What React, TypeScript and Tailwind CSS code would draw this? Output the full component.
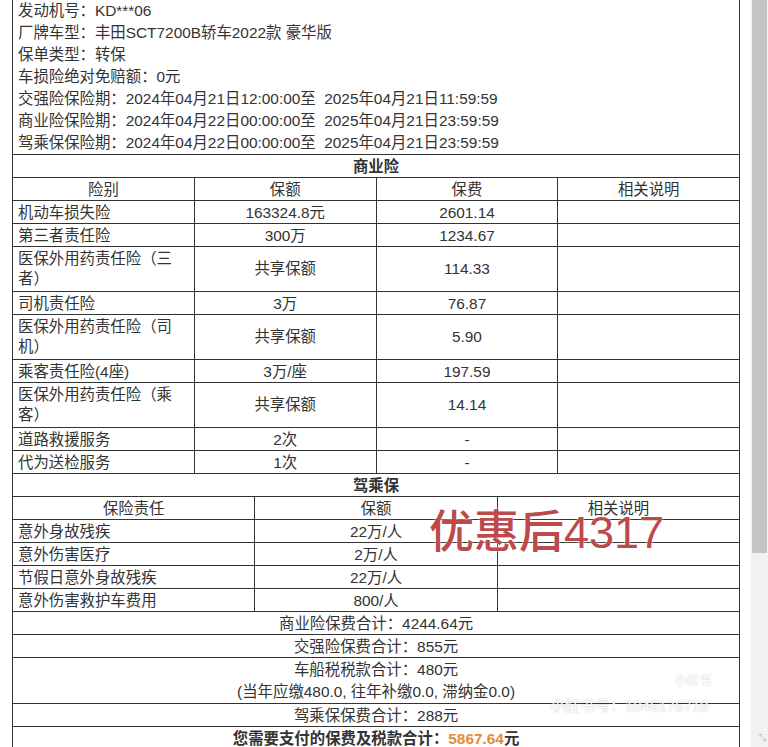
import React from 'react';

type Row = { name: React.ReactNode; amount: string; fee: string; tall?: boolean };

const commercial: Row[] = [
  { name: '机动车损失险', amount: '163324.8元', fee: '2601.14' },
  { name: '第三者责任险', amount: '300万', fee: '1234.67' },
  { name: <>医保外用药责任险（三<br />者）</>, amount: '共享保额', fee: '114.33', tall: true },
  { name: '司机责任险', amount: '3万', fee: '76.87' },
  { name: <>医保外用药责任险（司<br />机）</>, amount: '共享保额', fee: '5.90', tall: true },
  { name: '乘客责任险(4座)', amount: '3万/座', fee: '197.59' },
  { name: <>医保外用药责任险（乘<br />客）</>, amount: '共享保额', fee: '14.14', tall: true },
  { name: '道路救援服务', amount: '2次', fee: '-' },
  { name: '代为送检服务', amount: '1次', fee: '-' },
];

const driver = [
  { name: '意外身故残疾', amount: '22万/人' },
  { name: '意外伤害医疗', amount: '2万/人' },
  { name: '节假日意外身故残疾', amount: '22万/人' },
  { name: '意外伤害救护车费用', amount: '800/人' },
];

const info = [
  '发动机号：KD***06',
  '厂牌车型：丰田SCT7200B轿车2022款 豪华版',
  '保单类型：转保',
  '车损险绝对免赔额：0元',
  '交强险保险期：2024年04月21日12:00:00至  2025年04月21日11:59:59',
  '商业险保险期：2024年04月22日00:00:00至  2025年04月21日23:59:59',
  '驾乘保保险期：2024年04月22日00:00:00至  2025年04月21日23:59:59',
];

const cell = 'border border-[#333] px-[5px] py-0 h-[23px] leading-[21px] align-middle';
const cellTall = 'border border-[#333] px-[5px] py-0 h-[45px] leading-[20px] align-middle';

export default function App() {
  return (
    <div className="relative flex h-[747px] w-[768px] overflow-hidden bg-white font-['Liberation_Sans','Noto_Sans_CJK_SC',sans-serif] text-[15.4px] text-[#333]">
      <div className="w-[751px] shrink-0">
        <div className="ml-3 w-[728px]">
          <div className="border-x border-[#333] pl-[5px]">
            {info.map((line) => (
              <div key={line} className="h-[22px] leading-[22px] whitespace-pre">
                {line}
              </div>
            ))}
          </div>

          <table className="w-full table-fixed border-collapse">
            <colgroup>
              {Array.from({ length: 12 }).map((_, i) => (
                <col key={i} className="w-[60.6px]" />
              ))}
            </colgroup>
            <tbody>
              <tr>
                <td colSpan={12} className={`${cell} text-center font-bold`}>商业险</td>
              </tr>
              <tr>
                <td colSpan={3} className={`${cell} text-center`}>险别</td>
                <td colSpan={3} className={`${cell} text-center`}>保额</td>
                <td colSpan={3} className={`${cell} text-center`}>保费</td>
                <td colSpan={3} className={`${cell} text-center`}>相关说明</td>
              </tr>
              {commercial.map((r, i) => {
                const c = r.tall ? cellTall : cell;
                return (
                  <tr key={i}>
                    <td colSpan={3} className={c}>{r.name}</td>
                    <td colSpan={3} className={`${c} text-center`}>{r.amount}</td>
                    <td colSpan={3} className={`${c} text-center`}>{r.fee}</td>
                    <td colSpan={3} className={c}></td>
                  </tr>
                );
              })}

              <tr>
                <td colSpan={12} className={`${cell} text-center font-bold`}>驾乘保</td>
              </tr>
              <tr>
                <td colSpan={4} className={`${cell} text-center`}>保险责任</td>
                <td colSpan={4} className={`${cell} text-center`}>保额</td>
                <td colSpan={4} className={`${cell} text-center`}>相关说明</td>
              </tr>
              {driver.map((r) => (
                <tr key={r.name}>
                  <td colSpan={4} className={cell}>{r.name}</td>
                  <td colSpan={4} className={`${cell} text-center`}>{r.amount}</td>
                  <td colSpan={4} className={cell}></td>
                </tr>
              ))}

              <tr>
                <td colSpan={12} className={`${cell} text-center`}>商业险保费合计：4244.64元</td>
              </tr>
              <tr>
                <td colSpan={12} className={`${cell} text-center`}>交强险保费合计：855元</td>
              </tr>
              <tr>
                <td colSpan={12} className="border border-[#333] px-[5px] py-0 h-[46px] leading-[22px] text-center">
                  车船税税款合计：480元
                  <br />
                  (当年应缴480.0, 往年补缴0.0, 滞纳金0.0)
                </td>
              </tr>
              <tr>
                <td colSpan={12} className={`${cell} text-center`}>驾乘保保费合计：288元</td>
              </tr>
              <tr>
                <td colSpan={12} className={`${cell} text-center font-bold`}>
                  您需要支付的保费及税款合计：<span className="text-[#e48b3b]">5867.64</span>元
                </td>
              </tr>
            </tbody>
          </table>
        </div>
      </div>

      {/* scrollbar */}
      <div className="flex w-[17px] shrink-0 flex-col bg-[#f1f1f1]">
        <div className="mx-[1px] h-[553px] bg-[#c4c4c4]" />
        <div className="flex-1" />
        <div className="pb-1 pr-[2px] text-right text-[9px] leading-none text-[#bbb]">⤡</div>
      </div>

      {/* handwritten overlay */}
      <div className="absolute left-[429px] top-[510px] text-[45px] font-medium leading-none text-[#bc4a4a] [text-shadow:0_0_3px_rgba(255,255,255,0.9)]">
        优惠后4317
      </div>

      {/* watermark */}
      <div className="absolute left-[667px] top-[672px] rounded-full bg-white/60 px-2 text-[12px] leading-[18px] text-white [text-shadow:0_0_2px_rgba(0,0,0,0.25)]">
        小红书
      </div>
      <div className="absolute left-[550px] top-[697px] text-[15px] leading-[18px] text-white [text-shadow:0_0_2px_rgba(0,0,0,0.3)]">
        小红书号：1046176718
      </div>
    </div>
  );
}
